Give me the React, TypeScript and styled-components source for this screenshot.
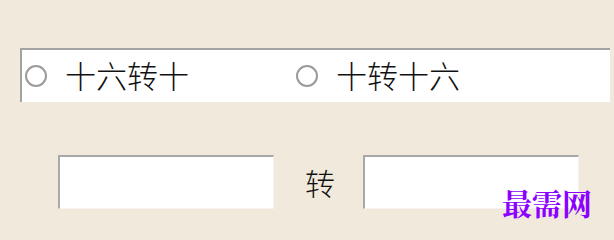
import React from "react";
import styled, { createGlobalStyle } from "styled-components";

const Global = createGlobalStyle`
  html, body { margin: 0; padding: 0; }
  body {
    background: #f1e9db;
    width: 614px;
    height: 234px;
    overflow: hidden;
    font-family: "Noto Sans CJK SC", "Noto Sans", sans-serif;
  }
`;

const Page = styled.div`
  position: relative;
  width: 614px;
  height: 234px;
  padding-top: 48px;
  box-sizing: border-box;
`;

const RadioPanel = styled.div`
  margin-left: 20px;
  width: 590px;
  height: 54px;
  box-sizing: border-box;
  background: #ffffff;
  border-top: 2px solid #a3a3a3;
  border-left: 2px solid #a3a3a3;
  display: flex;
  align-items: center;
  padding-left: 3px;
  padding-bottom: 4px;
`;

const RadioItem = styled.label<{ $w: number }>`
  display: flex;
  align-items: center;
  width: ${(p) => p.$w}px;
  gap: 18px;
  color: #111;
  font-size: 31px;
  font-weight: 300;
  line-height: 1;
`;

const Circle = styled.span`
  display: inline-block;
  width: 22px;
  height: 22px;
  box-sizing: border-box;
  border: 2px solid #9a9a9a;
  border-radius: 50%;
  background: #fff;
  flex: none;
  margin-top: 3px;
`;

const InputRow = styled.div`
  margin-top: 53px;
  padding-left: 58px;
  display: flex;
  align-items: center;
`;

const TextBox = styled.div`
  width: 216px;
  height: 54px;
  box-sizing: border-box;
  background: #fff;
  border-top: 2px solid #a8a8a8;
  border-left: 2px solid #a8a8a8;
  border-right: 1px solid #f6f3ee;
  border-bottom: 1px solid #f6f3ee;
`;

const Middle = styled.span`
  margin: 0 28px 0 31px;
  font-size: 30px;
  font-weight: 300;
  line-height: 1;
  color: #111;
`;

const Watermark = styled.div`
  position: absolute;
  left: 502px;
  top: 184px;
  font-family: "Noto Serif CJK SC", "Noto Sans CJK SC", serif;
  font-weight: 700;
  font-size: 30px;
  line-height: 1.2;
  color: #8c00ff;
  letter-spacing: 0;
`;

export default function App() {
  return (
    <Page>
      <Global />
      <RadioPanel>
        <RadioItem $w={271}>
          <Circle />
          <span>十六转十</span>
        </RadioItem>
        <RadioItem $w={280}>
          <Circle />
          <span>十转十六</span>
        </RadioItem>
      </RadioPanel>
      <InputRow>
        <TextBox />
        <Middle>转</Middle>
        <TextBox />
      </InputRow>
      <Watermark>最需网</Watermark>
    </Page>
  );
}
